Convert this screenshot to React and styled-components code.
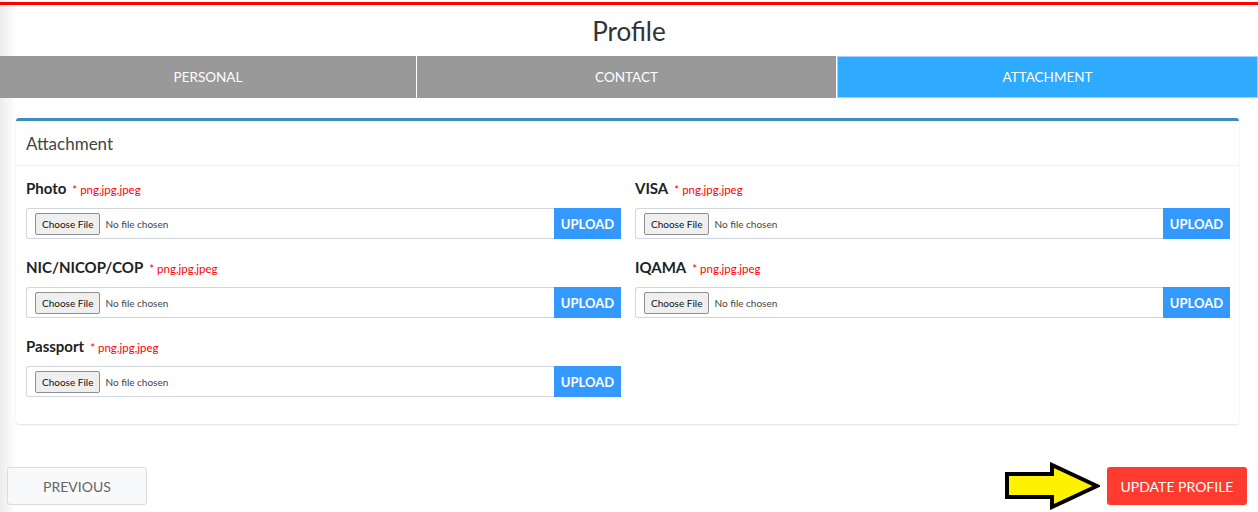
import React from "react";
import styled, { createGlobalStyle } from "styled-components";

const GlobalStyle = createGlobalStyle`
    html, body {
        margin: 0;
        padding: 0;
    }
    body {
        font-family: Lato, "Open Sans", sans-serif;
        background: linear-gradient(to right, #ececec 0px, #ffffff 16px);
        color: #333;
    }
`

const Page = styled('div')`
    width: 1258px;
    height: 512px;
    overflow: hidden;
    padding-top: 2px;
    box-sizing: border-box;
`

const TopLine = styled('div')`
    height: 3px;
    background: #ff0000;
`

const Title = styled('h1')`
    margin: 0;
    height: 51px;
    line-height: 52px;
    text-align: center;
    font-size: 26px;
    font-weight: 400;
    color: #333;
`

const Tabs = styled('nav')`
    display: grid;
    grid-template-columns: 416px 419px 1fr;
    gap: 1px;
    background: #fff;
    height: 42px;
`

const Tab = styled('div')`
    display: flex;
    align-items: center;
    justify-content: center;
    background: ${p => (p.$active ? "#2eaaff" : "#999999")};
    border: ${p => (p.$active ? "1px solid #a9cfff" : "none")};
    color: #fff;
    font-size: 13.5px;
    font-weight: 400;
    text-transform: uppercase;
`

const Card = styled('section')`
    margin: 20px 19px 0 16px;
    border-top: 3px solid #3c8dbc;
    border-radius: 3px;
    background: #fff;
    box-shadow: 0 1px 2px rgba(0, 0, 0, 0.12);
`

const CardHeader = styled('div')`
    height: 44px;
    display: flex;
    align-items: center;
    padding: 0 10px;
    border-bottom: 1px solid #f0f0f0;
    font-size: 17px;
    color: #444;
`

const CardBody = styled('div')`
    padding: 13px 9px 8px 10px;
    display: grid;
    grid-template-columns: 595px 595px;
    column-gap: 14px;
`

const Field = styled('div')`
    margin-bottom: 19px;
`

const Label = styled('label')`
    display: flex;
    align-items: baseline;
    height: 20px;
    margin-bottom: 9px;
    font-size: 15px;
    font-weight: 700;
    color: #222;
`

const Hint = styled('span')`
    margin-left: 6px;
    font-size: 11.5px;
    font-weight: 400;
    color: #ff0000;
`

const InputGroup = styled('div')`
    display: flex;
    height: 31px;
`

const FileBox = styled('div')`
    flex: 1;
    display: flex;
    align-items: center;
    padding: 0 8px;
    border: 1px solid #d2d6de;
    border-right: none;
    border-radius: 3px 0 0 3px;
`

const FileInput = styled('input')`
    font-family: Lato, sans-serif;
    font-size: 10px;
    color: #444;

    &::file-selector-button {
        font-family: Lato, sans-serif;
        font-size: 10px;
        height: 22px;
        padding: 0 6px;
        margin-right: 5px;
        border: 1px solid #8f8f8f;
        border-radius: 2px;
        background: #efefef;
        color: #111;
    }
`

const UploadButton = styled('button')`
    width: 67px;
    border: none;
    background: #3399ff;
    color: #fff;
    font-family: Lato, sans-serif;
    font-size: 13px;
    font-weight: 700;
    padding: 0;
`

const Footer = styled('div')`
    display: flex;
    justify-content: space-between;
    align-items: center;
    margin-top: 38px;
    padding: 0 11px 0 7px;
`

const PrevButton = styled('button')`
    width: 140px;
    height: 38px;
    border: 1px solid #dcdcdc;
    border-radius: 3px;
    background: #f8f9fa;
    color: #666;
    font-family: Lato, sans-serif;
    font-size: 14px;
    text-transform: uppercase;
`

const Right = styled('div')`
    display: flex;
    align-items: center;
    gap: 7px;
`

const UpdateButton = styled('button')`
    width: 140px;
    height: 38px;
    border: none;
    border-radius: 3px;
    background: #ff3b30;
    color: #fff;
    font-family: Lato, sans-serif;
    font-size: 14px;
    text-transform: uppercase;
`

const Arrow = () => (
    <svg width="96" height="48" viewBox="0 0 96 48">
        <polygon
            points="3,12 48,12 48,3 93,24 48,45 48,35 3,35"
            fill="#fff200"
            stroke="#000"
            strokeWidth="4"
            strokeLinejoin="miter"
        />
    </svg>
)

const fields = [
    "Photo",
    "VISA",
    "NIC/NICOP/COP",
    "IQAMA",
    "Passport",
]

const App = () => {
    return (
        <Page>
            <GlobalStyle />
            <TopLine />
            <Title>Profile</Title>
            <Tabs>
                <Tab>Personal</Tab>
                <Tab>Contact</Tab>
                <Tab $active>Attachment</Tab>
            </Tabs>
            <Card>
                <CardHeader>Attachment</CardHeader>
                <CardBody>
                    {fields.map((name) => (
                        <Field key={name}>
                            <Label>
                                {name}
                                <Hint>* png,jpg,jpeg</Hint>
                            </Label>
                            <InputGroup>
                                <FileBox>
                                    <FileInput type="file" accept=".png,.jpg,.jpeg" />
                                </FileBox>
                                <UploadButton>UPLOAD</UploadButton>
                            </InputGroup>
                        </Field>
                    ))}
                </CardBody>
            </Card>
            <Footer>
                <PrevButton>Previous</PrevButton>
                <Right>
                    <Arrow />
                    <UpdateButton>Update Profile</UpdateButton>
                </Right>
            </Footer>
        </Page>
    );
}

export default App;
